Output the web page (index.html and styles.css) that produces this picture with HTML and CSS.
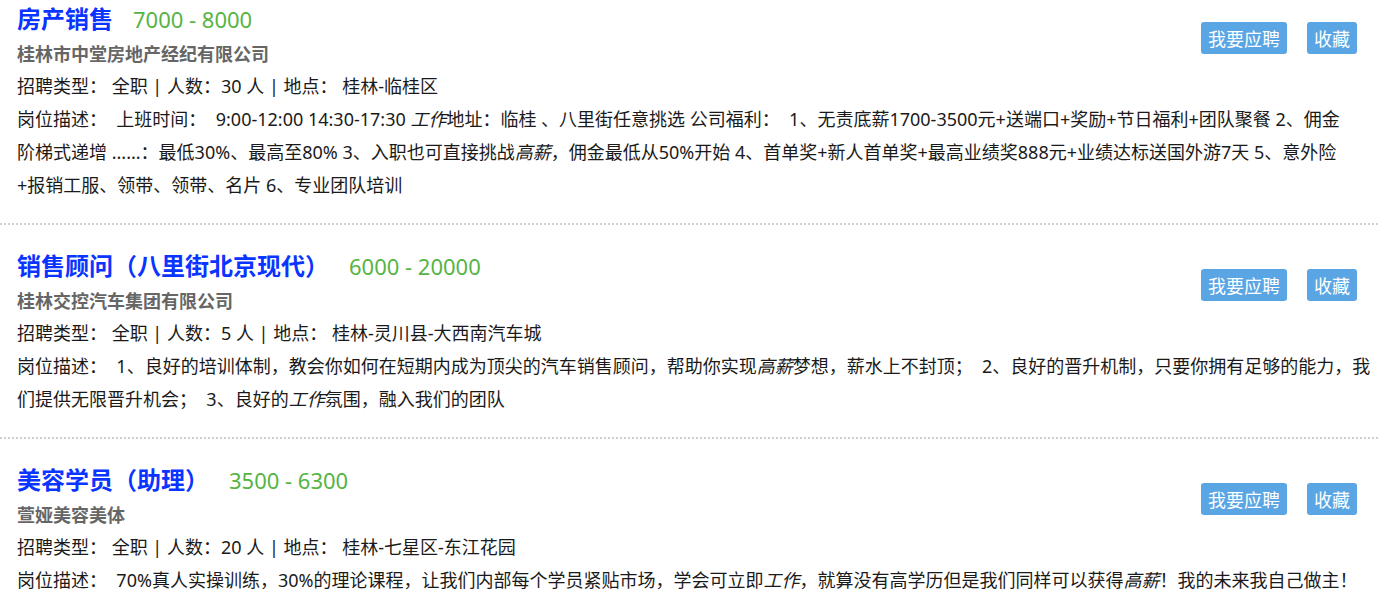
FILE: index.html
```html
<!DOCTYPE html>
<html lang="zh-CN">
<head>
    <meta charset="UTF-8">
    <title>招聘信息</title>
    <link rel="stylesheet" href="styles.css">
</head>
<body>
    <div class="job-list">
        <!-- 职位 1 -->
        <div class="job">
            <div class="job-actions">
                <button class="btn">我要应聘</button>
                <button class="btn">收藏</button>
            </div>
            <div class="job-head">
                <span class="job-title">房产销售</span>
                <span class="job-salary">7000 - 8000</span>
            </div>
            <div class="job-company">桂林市中堂房地产经纪有限公司</div>
            <div class="job-info">招聘类型： 全职 | 人数：30 人 | 地点： 桂林-临桂区</div>
            <div class="job-desc">岗位描述：&nbsp; 上班时间：&nbsp; 9:00-12:00 14:30-17:30 <em>工作</em>地址：临桂 、八里街任意挑选 公司福利：&nbsp; 1、无责底薪1700-3500元+送端口+奖励+节日福利+团队聚餐 2、佣金<br>阶梯式递增 ......：最低30%、最高至80% 3、入职也可直接挑战<em>高薪</em>，佣金最低从50%开始 4、首单奖+新人首单奖+最高业绩奖888元+业绩达标送国外游7天 5、意外险<br>+报销工服、领带、领带、名片 6、专业团队培训</div>
        </div>

        <!-- 职位 2 -->
        <div class="job">
            <div class="job-actions">
                <button class="btn">我要应聘</button>
                <button class="btn">收藏</button>
            </div>
            <div class="job-head">
                <span class="job-title">销售顾问（八里街北京现代）</span>
                <span class="job-salary">6000 - 20000</span>
            </div>
            <div class="job-company">桂林交控汽车集团有限公司</div>
            <div class="job-info">招聘类型： 全职 | 人数：5 人 | 地点： 桂林-灵川县-大西南汽车城</div>
            <div class="job-desc">岗位描述：&nbsp; 1、良好的培训体制，教会你如何在短期内成为顶尖的汽车销售顾问，帮助你实现<em>高薪</em>梦想，薪水上不封顶；&nbsp; 2、良好的晋升机制，只要你拥有足够的能力，我们提供无限晋升机会；&nbsp; 3、良好的<em>工作</em>氛围，融入我们的团队</div>
        </div>

        <!-- 职位 3 -->
        <div class="job">
            <div class="job-actions">
                <button class="btn">我要应聘</button>
                <button class="btn">收藏</button>
            </div>
            <div class="job-head">
                <span class="job-title">美容学员（助理）</span>
                <span class="job-salary">3500 - 6300</span>
            </div>
            <div class="job-company">萱娅美容美体</div>
            <div class="job-info">招聘类型： 全职 | 人数：20 人 | 地点： 桂林-七星区-东江花园</div>
            <div class="job-desc">岗位描述：&nbsp; 70%真人实操训练，30%的理论课程，让我们内部每个学员紧贴市场，学会可立即<em>工作</em>，就算没有高学历但是我们同样可以获得<em>高薪</em>！我的未来我自己做主！</div>
        </div>
    </div>
</body>
</html>
```

FILE: styles.css
```css
body {
    margin: 0;
    font-family: "Noto Sans", "Noto Sans CJK SC", sans-serif;
    color: #1a1a1a;
    background: #fff;
}

/* 职位列表 */
.job-list {
    padding-right: 4px;
}
.job {
    padding: 22px 4px 21px 17px;
    border-bottom: 2px dotted #d0d0d0;
}
.job:first-child {
    padding-top: 0;
}

/* 标题 + 薪资 */
.job-head {
    display: flex;
    align-items: baseline;
    height: 36px;
    line-height: 36px;
}
.job-title {
    font-family: "Noto Sans CJK SC", sans-serif;
    font-size: 24px;
    font-weight: bold;
    color: #0a34ff;
}
.job-salary {
    margin-left: 20px;
    font-size: 22px;
    color: #55b443;
}
.job-company {
    font-family: "Noto Sans CJK SC", sans-serif;
    font-size: 18px;
    font-weight: bold;
    color: #666;
    line-height: 34px;
}
.job-info, .job-desc {
    font-size: 18px;
    line-height: 33px;
}
.job-desc em {
    font-style: italic;
}

/* 按钮 */
.job-actions {
    float: right;
    margin: 22px 17px 0 0;
    display: flex;
    gap: 20px;
}
.btn {
    height: 32px;
    padding: 0 7px;
    border: none;
    border-radius: 3px;
    background-color: #5aa5e3;
    color: #fff;
    font-family: "Noto Sans CJK SC", sans-serif;
    font-size: 18px;
    cursor: pointer;
}
.btn:hover {
    background-color: #4a94d2;
}
```
